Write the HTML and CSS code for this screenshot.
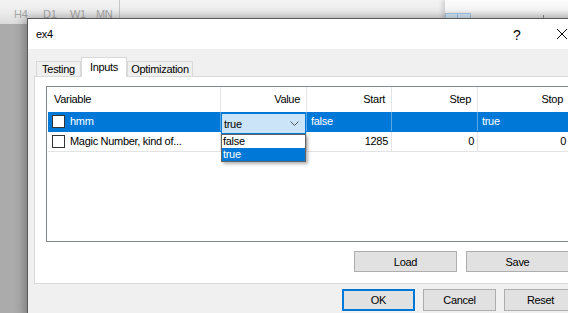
FILE: index.html
```html
<!DOCTYPE html>
<html lang="en">
  <head>
    <meta charset="UTF-8">
    <title>ex4</title>
    <link rel="stylesheet" href="styles.css">
  </head>
  <body>
	<div class="chartbar">
		<div class="periods"><span>H4</span><span>D1</span><span>W1</span><span>MN</span></div>
		<div class="chartwin">
			<span class="chartwin-tab"></span><span class="chartwin-tab"></span>
			<i class="tick"></i>
		</div>
	</div>

	<!-- tester dialog, floating over the terminal -->
	<div class="dialog">
		<div class="titlebar">
			<span class="title">ex4</span>
			<span class="caption-btn help">?</span>
			<span class="caption-btn">
				<svg width="10" height="10" viewBox="0 0 10 10"><path d="M0 0 L10 10 M10 0 L0 10" stroke="#000" stroke-width="1" fill="none"/></svg>
			</span>
		</div>
		<div class="dlg-body">
			<div class="tabs">
				<div class="tab tab_testing">Testing</div>
				<div class="tab tab_active">Inputs</div>
				<div class="tab tab_optim">Optimization</div>
			</div>
			<div class="panel">
				<div class="listview">
					<div class="lv-row lv-header">
						<div class="cell">Variable</div>
						<div class="cell right">Value</div>
						<div class="cell right">Start</div>
						<div class="cell right">Step</div>
						<div class="cell right">Stop</div>
					</div>
					<div class="lv-row lv-item selected">
						<div class="cell"><span class="check"></span>hmm</div>
						<div class="cell"></div>
						<div class="cell">false</div>
						<div class="cell"></div>
						<div class="cell">true</div>
					</div>
					<div class="lv-row lv-item">
						<div class="cell"><span class="check"></span>Magic Number, kind of...</div>
						<div class="cell right">1285</div>
						<div class="cell right">1285</div>
						<div class="cell right">0</div>
						<div class="cell right">0</div>
					</div>

					<div class="combo">
						<span>true</span>
						<svg width="9" height="5" viewBox="0 0 9 5"><path d="M0.5 0.5 L4.5 4.5 L8.5 0.5" stroke="#555" stroke-width="1" fill="none"/></svg>
					</div>
					<div class="combo-list">
						<div class="combo-opt">false</div>
						<div class="combo-opt picked">true</div>
					</div>
				</div>
				<div class="panel-buttons">
					<button class="btn btn_wide">Load</button>
					<button class="btn btn_wide">Save</button>
				</div>
			</div>
			<div class="dlg-buttons">
				<button class="btn btn_default">OK</button>
				<button class="btn">Cancel</button>
				<button class="btn">Reset</button>
			</div>
		</div>
	</div>
  </body>
</html>
```

FILE: styles.css
```css
        body, html {
            border: none;
            padding: 0;
            margin: 0;
        }
        body {
            width: 568px;
            height: 313px;
            overflow: hidden;
            position: relative;
            background: #ababab;
            font-family: "Liberation Sans", Arial, sans-serif;
            font-size: 11px;
            letter-spacing: -0.3px;
            color: #000;
        }

        /* terminal chart toolbar behind the dialog */
        .chartbar {
            display: flex;
            height: 24px;
            background: linear-gradient(#f3f3f3, #ececec 50%, #dadada);
        }
        .periods {
            display: flex;
            width: 105px;
            padding: 9px 0 0 14px;
            border-right: 1px solid #c6c6c6;
            color: #a6a6a6;
            line-height: 11px;
        }
        .periods span:nth-child(1) { width: 29px; }
        .periods span:nth-child(2) { width: 27px; }
        .periods span:nth-child(3) { width: 26px; }
        .chartwin {
            display: flex;
            align-items: flex-start;
            width: 123px;
            margin-left: auto;
            padding-top: 13px;
            box-sizing: border-box;
            background: linear-gradient(#fcfcfc, #f5f5f5 40%, #e0e0e0 75%);
            box-shadow: -3px 0 4px rgba(0, 0, 0, 0.12);
        }
        .chartwin-tab {
            width: 11px;
            height: 6px;
            border: 1px solid #9fc5e8;
            background: #d2e4f4;
        }
        .chartwin-tab + .chartwin-tab {
            border-left: none;
            width: 12px;
        }
        .tick {
            width: 1px;
            height: 5px;
            margin: 2px 0 0 72px;
            background: #888;
        }

        /* dialog window */
        .dialog {
            position: absolute;
            left: 27px;
            top: 18px;
            width: 560px;
            height: 300px;
            border-left: 1px solid #5a5a5a;
            border-top: 1px solid #5a5a5a;
            background: #f0f0f0;
            box-shadow: -3px -1px 9px rgba(0, 0, 0, 0.28);
        }
        .titlebar {
            display: flex;
            align-items: center;
            height: 30px;
            padding-left: 8px;
            background: #fff;
            font-size: 11px;
        }
        .title {
            margin-right: auto;
        }
        .caption-btn {
            display: flex;
            align-items: center;
            justify-content: center;
            width: 46px;
            height: 30px;
        }
        .help {
            font-size: 14px;
            letter-spacing: 0;
            padding: 1px 0 0 2px;
            box-sizing: border-box;
        }
        .caption-btn:last-child {
            margin-right: 3px;
        }

        .dlg-body {
            padding: 8px 6px 0;
        }

        .tabs {
            display: flex;
            align-items: flex-end;
            height: 19px;
            margin-left: 2px;
            position: relative;
            z-index: 1;
        }
        .tab {
            height: 15px;
            line-height: 14px;
            border: 1px solid #d9d9d9;
            border-bottom: none;
            box-sizing: border-box;
            background: #f0f0f0;
            text-align: center;
        }
        .tab_testing {
            width: 45px;
        }
        .tab_optim {
            width: 66px;
            margin-left: 1px;
        }
        .tab_active {
            width: 46px;
            height: 20px;
            line-height: 18px;
            margin-bottom: -1px;
            margin-right: -1px;
            background: #fff;
        }

        .panel {
            height: 208px;
            padding: 9px 11px 0;
            box-sizing: border-box;
            border: 1px solid #d9d9d9;
            background: #fff;
        }

        .listview {
            position: relative;
            height: 156px;
            border: 1px solid #828790;
            box-sizing: border-box;
            background: #fff;
        }
        .lv-row {
            display: grid;
            grid-template-columns: 173px 86px 85px 86px 1fr;
            margin-left: 1px;
        }
        .lv-header {
            height: 25px;
        }
        .lv-header .cell {
            border-right: 1px solid #e5e5e5;
            line-height: 25px;
            padding: 0 6px;
        }
        .cell {
            white-space: nowrap;
            overflow: hidden;
            border-right: 1px solid #e3e3e3;
        }
        .cell:last-child {
            border-right: none;
        }
        .right {
            text-align: right;
        }
        .lv-item {
            height: 20px;
            border-bottom: 1px solid #e3e3e3;
            box-sizing: border-box;
        }
        .lv-item .cell {
            line-height: 19px;
            padding: 0 3px 0 4px;
        }
        .lv-item .cell:first-child {
            display: flex;
            align-items: center;
        }
        .lv-item.selected {
            background: #0078d7;
            border-bottom-color: #0078d7;
            color: #fff;
        }
        .lv-item.selected .cell {
            border-right-color: rgba(255, 255, 255, 0.35);
        }
        .check {
            width: 13px;
            height: 13px;
            margin-right: 5px;
            border: 1px solid #333;
            box-sizing: border-box;
            background: #fff;
        }

        /* open combo box editor over the Value cell */
        .combo {
            position: absolute;
            left: 174px;
            top: 26px;
            width: 85px;
            height: 21px;
            display: flex;
            align-items: center;
            justify-content: space-between;
            padding: 0 6px 0 2px;
            box-sizing: border-box;
            border: 1px solid #0078d7;
            background: #cce4f7;
        }
        .combo-list {
            position: absolute;
            left: 174px;
            top: 47px;
            width: 85px;
            height: 28px;
            border: 1px solid #646464;
            box-sizing: border-box;
            background: #fff;
            box-shadow: 2px 2px 3px rgba(0, 0, 0, 0.3);
        }
        .combo-opt {
            height: 13px;
            line-height: 13px;
            padding-left: 1px;
        }
        .combo-opt.picked {
            background: #0078d7;
            color: #fff;
        }

        .btn {
            height: 21px;
            width: 73px;
            padding: 0;
            border: 1px solid #adadad;
            background: #e1e1e1;
            font: inherit;
            letter-spacing: inherit;
            color: #000;
        }
        .btn_wide {
            width: 103px;
        }
        .btn_default {
            border: 2px solid #0078d7;
        }
        .panel-buttons {
            display: flex;
            justify-content: flex-end;
            gap: 9px;
            margin: 9px 1px 0 0;
        }
        .dlg-buttons {
            display: flex;
            justify-content: flex-end;
            gap: 8px;
            margin-top: 5px;
            padding-right: 5px;
        }
        .dlg-buttons .btn {
            height: 22px;
        }
```
